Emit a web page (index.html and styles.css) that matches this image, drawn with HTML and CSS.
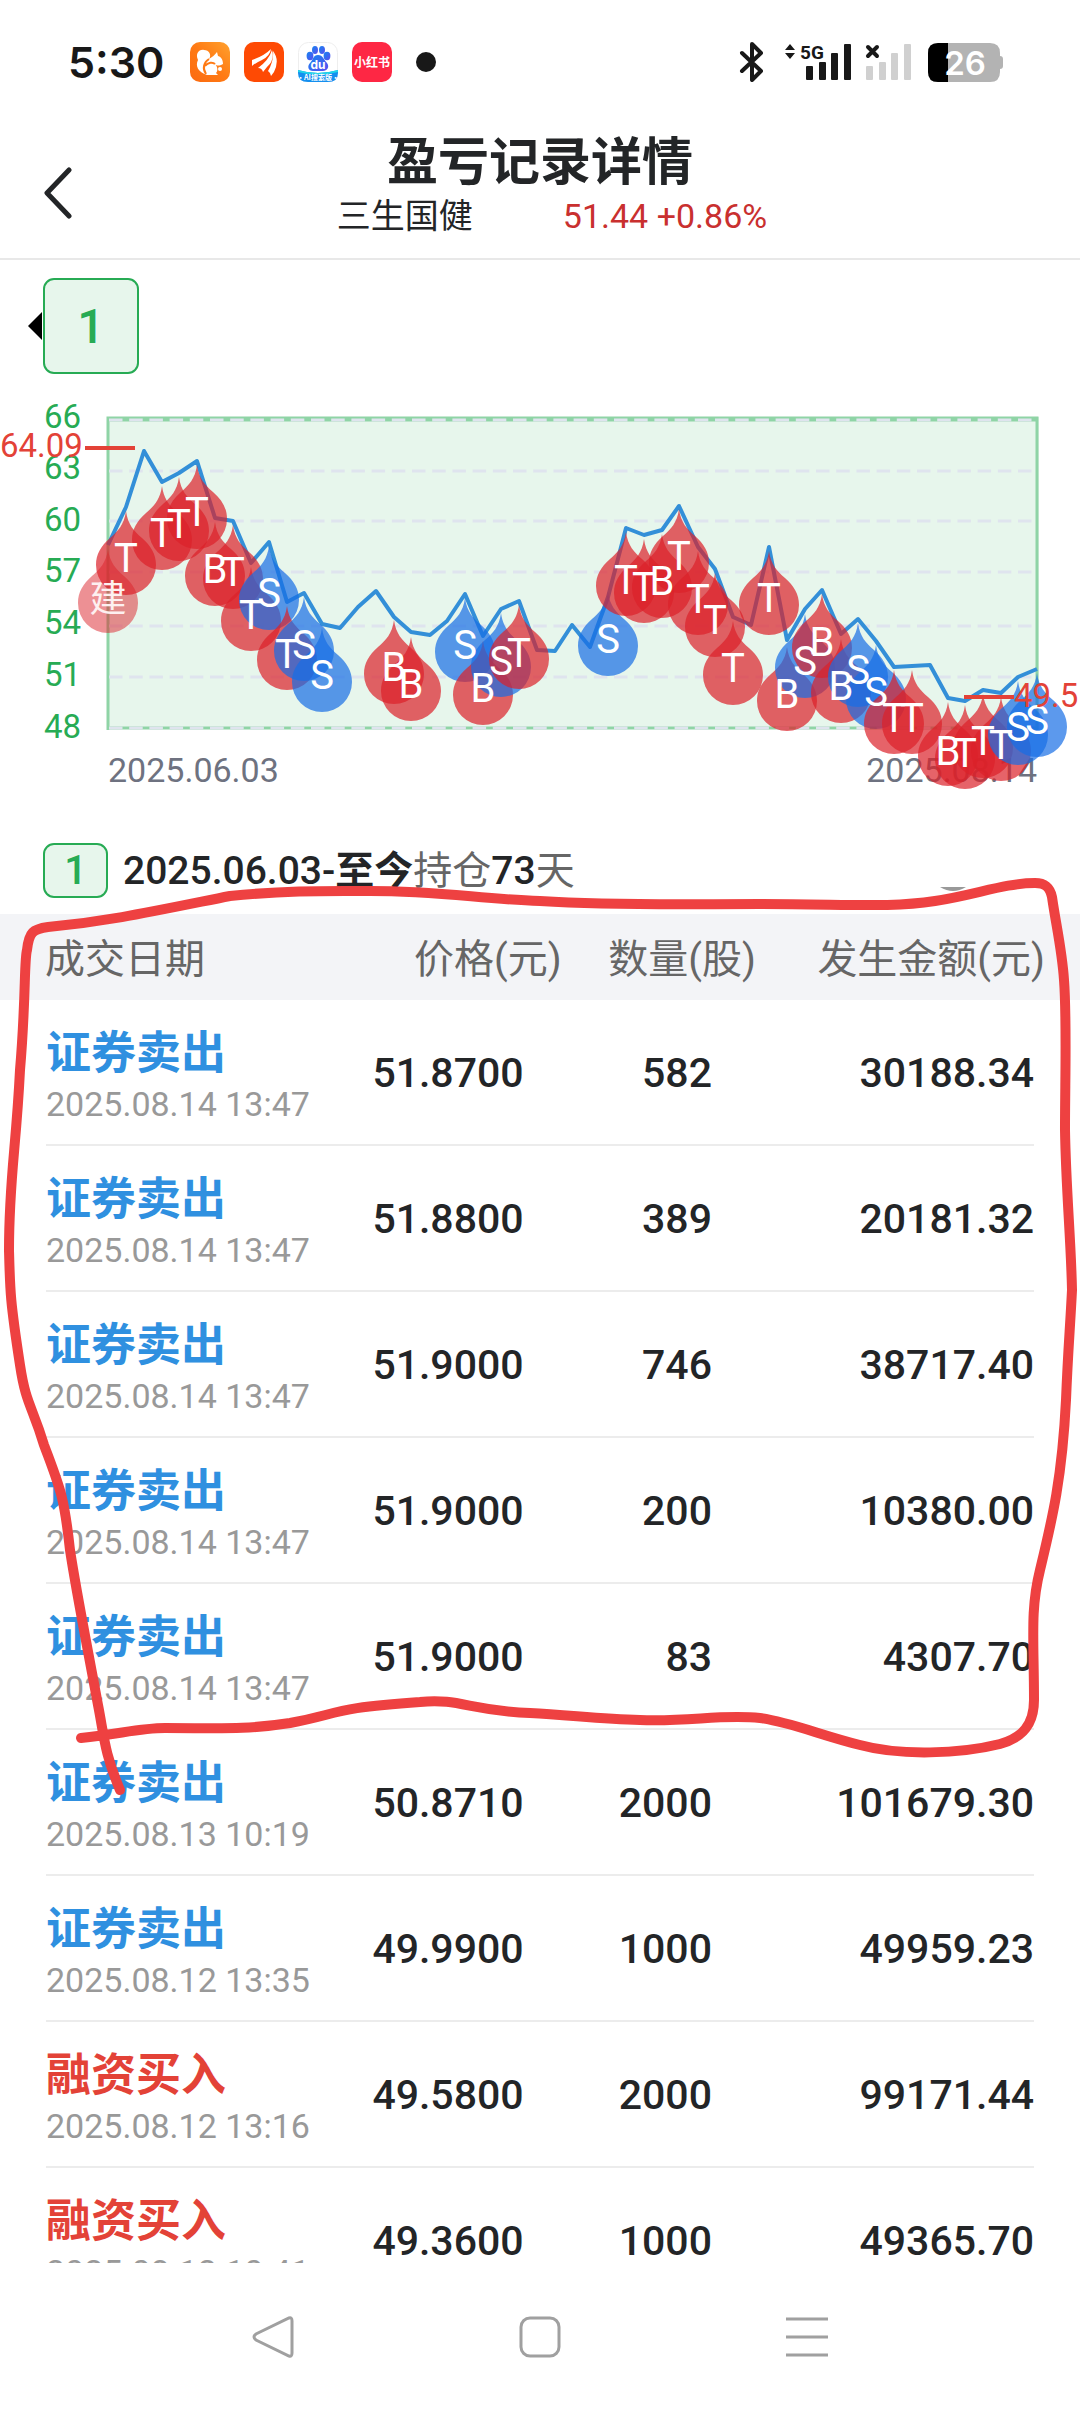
FILE: index.html
```html
<!DOCTYPE html>
<html lang="zh-CN">
<head>
<meta charset="utf-8">
<meta name="viewport" content="width=device-width, initial-scale=1">
<title>盈亏记录详情</title>
<link rel="stylesheet" href="styles.css">
</head>
<body>
<div class="screen">
  <div class="status-bar">
    <span class="clock">5:30</span>
    <div class="app-icons">
      <svg viewBox="0 0 40 40" class="app-icon" aria-hidden="true">
        <defs><linearGradient id="uc" x1="1" y1="0" x2="0" y2="1"><stop offset="0" stop-color="#ffa22e"/><stop offset="0.5" stop-color="#ff7a14"/><stop offset="1" stop-color="#fb6a10"/></linearGradient></defs>
        <rect width="40" height="40" rx="10" fill="url(#uc)"/>
        <path fill="#fff" d="M17 33C8 30 5 24 8 18C5 12 9 7 14 8C19 8 22 13 19 17C22 15 25 13 27 10L28 14C32 15 33 19 33 22C29 24 27 24 25 22C28 25 28 29 26 31L28 33Z"/>
        <path fill="none" stroke="#ff7a14" stroke-width="2" d="M19 17C14 20 12 26 16 32M15 24C18 20 23 20 25 22"/>
        <circle cx="30" cy="27" r="2" fill="#fff"/>
      </svg>
      <svg viewBox="0 0 40 40" class="app-icon" aria-hidden="true">
        <rect width="40" height="40" rx="10" fill="#fe4a04"/>
        <path fill="#fff" d="M8 18Q20 14 27 7Q26 14 18 18Q13 20 8 24ZM14 26Q25 18 28 8Q31 18 23 25L19 30Q18 26 14 26ZM24 29Q30 19 29 9Q36 18 30 30L27 34Q27 31 24 29Z"/>
      </svg>
      <svg viewBox="0 0 40 40" class="app-icon" aria-hidden="true">
        <defs><linearGradient id="bd" x1="0" y1="0" x2="1" y2="1"><stop offset="0" stop-color="#1486f0"/><stop offset="1" stop-color="#5a4cf0"/></linearGradient></defs>
        <rect x="0.5" y="0.5" width="39" height="39" rx="10" fill="#fff" stroke="#eee"/>
        <g fill="url(#bd)"><ellipse cx="12" cy="14" rx="3.4" ry="4.2"/><ellipse cx="17" cy="8" rx="3" ry="4"/><ellipse cx="24" cy="8" rx="3" ry="4"/><ellipse cx="29" cy="14" rx="3.4" ry="4.2"/><path d="M20 13C25 13 26 18 29 21C32 25 29 29 25 29L15 29C10 29 9 24 12 21C15 18 15 13 20 13Z"/></g>
        <path d="M0 28Q20 34 40 28V31Q40 40 30 40H10Q0 40 0 31Z" fill="#158fef"/>
        <path d="M0 28Q20 34 40 28L40 30Q20 35 0 30Z" fill="#20d6e8"/>
        <text x="20" y="27" class="icon-text du">du</text>
        <text x="20" y="38" class="icon-text tiny">·AI搜索版·</text>
      </svg>
      <svg viewBox="0 0 40 40" class="app-icon" aria-hidden="true">
        <rect width="40" height="40" rx="10" fill="#fe2744"/>
        <text x="20" y="25" class="icon-text red-book">小红书</text>
      </svg>
      <span class="more-dot"></span>
    </div>
    <svg class="system-icons" viewBox="0 0 268 40" aria-label="蓝牙 5G 电量26%">
      <path d="M3 11L22 29L13 38V2L22 11L3 29" fill="none" stroke="#181818" stroke-width="4" stroke-linejoin="round" stroke-linecap="round"/>
      <path d="M46 8L51 2L56 8ZM46 11L51 17L56 11Z" fill="#181818"/>
      <text x="61" y="17" class="net-label">5G</text>
      <g fill="#181818"><rect x="67" y="24" width="7" height="14" rx="1"/><rect x="80" y="20" width="7" height="18" rx="1"/><rect x="92" y="11" width="7" height="27" rx="1"/><rect x="105" y="2" width="7" height="36" rx="1"/></g>
      <path d="M129 5L138 14M138 5L129 14" stroke="#181818" stroke-width="4" stroke-linecap="round"/>
      <g fill="#d0d0d0"><rect x="127" y="24" width="7" height="14" rx="1"/><rect x="140" y="20" width="7" height="18" rx="1"/><rect x="152" y="11" width="7" height="27" rx="1"/><rect x="165" y="2" width="7" height="36" rx="1"/></g>
      <path d="M199 1H251Q261 1 261 11V14Q264 14 264 17V24Q264 27 261 27V30Q261 40 251 40H199Q189 40 189 30V11Q189 1 199 1Z" fill="#b3b3b3"/>
      <path d="M209 1H199Q189 1 189 11V30Q189 40 199 40H209Z" fill="#000"/>
      <text x="226" y="33" class="battery-label">26</text>
    </svg>
  </div>

  <header class="title-bar">
    <button class="back" aria-label="返回"><svg viewBox="0 0 28 52"><path d="M25 3L3 26L25 49" fill="none" stroke="#232527" stroke-width="5" stroke-linecap="round" stroke-linejoin="round"/></svg></button>
    <h1>盈亏记录详情</h1>
    <p class="stock"><span>三生国健</span><span class="quote">51.44 +0.86%</span></p>
  </header>

  <main>
    <div class="periods">
      <svg class="arrow" viewBox="0 0 14 28" aria-hidden="true"><path d="M14 0V28L0 14Z"/></svg>
      <button class="period">1</button>
    </div>

    <svg class="chart" viewBox="0 390 1080 410" role="img" aria-label="股价走势与买卖点">
      <defs>
        <path id="drop" d="M0 0C2 14 8 20 16 27C25 35 30 43 30 54A30 30 0 0 1 -30 54C-30 43 -25 35 -16 27C-8 20 -2 14 0 0Z"/>
      </defs>
      <rect x="107" y="417" width="932" height="312" fill="#e7f6ec"/>
      <path d="M108 730V418H1037V730M108 420H1037M108 728H1037" fill="none" stroke="#8fd4a6" stroke-width="3"/>
      <path d="M109 420H1037M109 471H1037M109 521H1037M109 572H1037M109 626H1037M109 677H1037M109 728H1037" stroke="#dfe4ee" stroke-width="3" stroke-dasharray="13.5 6.7" fill="none"/>
      <g class="axis">
        <text x="81" y="428">66</text><text x="81" y="479">63</text><text x="81" y="531">60</text><text x="81" y="582">57</text><text x="81" y="634">54</text><text x="81" y="686">51</text><text x="81" y="738">48</text>
      </g>
      <g class="dates"><text x="108" y="782">2025.06.03</text><text x="1037" y="782" text-anchor="end">2025.08.14</text></g>
      <polyline fill="none" stroke="#338fd8" stroke-width="4" stroke-linejoin="round" points="108,545 126,507 144,451 162,482 179,473 197,461 215,518 233,521 251,563 269,542 287,602 304,593 322,624 340,628 358,607 376,591 394,617 411,632 430,635 447,621 465,594 483,636 501,609 519,601 537,650 555,651 572,625 590,647 608,597 626,528 644,535 662,530 679,506 698,547 715,569 733,617 751,625 769,547 787,640 805,609 822,590 841,634 858,619 876,641 894,667 912,666 930,665 948,698 965,701 983,690 1001,693 1018,677 1037,669"/>
      <g class="drops">
        <use href="#drop" x="108" y="549" class="open"/>
        <use href="#drop" x="126" y="511"/>
        <use href="#drop" x="162" y="486"/>
        <use href="#drop" x="179" y="477"/>
        <use href="#drop" x="197" y="465"/>
        <use href="#drop" x="215" y="522"/>
        <use href="#drop" x="233" y="525"/>
        <use href="#drop" x="251" y="567"/>
        <use href="#drop" x="269" y="546" class="sell"/>
        <use href="#drop" x="287" y="606"/>
        <use href="#drop" x="304" y="597" class="sell"/>
        <use href="#drop" x="322" y="628" class="sell"/>
        <use href="#drop" x="394" y="620"/>
        <use href="#drop" x="411" y="637"/>
        <use href="#drop" x="465" y="598" class="sell"/>
        <use href="#drop" x="483" y="641"/>
        <use href="#drop" x="501" y="613" class="sell"/>
        <use href="#drop" x="519" y="605"/>
        <use href="#drop" x="608" y="592" class="sell"/>
        <use href="#drop" x="626" y="532"/>
        <use href="#drop" x="644" y="539"/>
        <use href="#drop" x="662" y="534"/>
        <use href="#drop" x="679" y="509"/>
        <use href="#drop" x="698" y="551"/>
        <use href="#drop" x="715" y="573"/>
        <use href="#drop" x="733" y="621"/>
        <use href="#drop" x="769" y="551"/>
        <use href="#drop" x="787" y="647"/>
        <use href="#drop" x="805" y="614" class="sell"/>
        <use href="#drop" x="822" y="594"/>
        <use href="#drop" x="841" y="639"/>
        <use href="#drop" x="858" y="623" class="sell"/>
        <use href="#drop" x="876" y="645" class="sell"/>
        <use href="#drop" x="894" y="670"/>
        <use href="#drop" x="912" y="670"/>
        <use href="#drop" x="948" y="702"/>
        <use href="#drop" x="965" y="705"/>
        <use href="#drop" x="983" y="694"/>
        <use href="#drop" x="1001" y="697"/>
        <use href="#drop" x="1018" y="681" class="sell"/>
        <use href="#drop" x="1037" y="673" class="sell"/>
      </g>
      <g class="marks">
        <text x="108" y="612" class="open">建</text>
        <text x="126" y="572">T</text><text x="162" y="547">T</text><text x="179" y="538">T</text><text x="197" y="526">T</text>
        <text x="215" y="583">B</text><text x="233" y="586">T</text><text x="251" y="629">T</text><text x="269" y="607">S</text>
        <text x="287" y="668">T</text><text x="304" y="659">S</text><text x="322" y="689">S</text>
        <text x="394" y="681">B</text><text x="411" y="698">B</text><text x="465" y="659">S</text><text x="483" y="702">B</text>
        <text x="501" y="675">S</text><text x="519" y="667">T</text><text x="608" y="653">S</text>
        <text x="626" y="594">T</text><text x="644" y="601">T</text><text x="662" y="595">B</text><text x="679" y="570">T</text>
        <text x="698" y="613">T</text><text x="715" y="634">T</text><text x="733" y="682">T</text><text x="769" y="612">T</text>
        <text x="787" y="708">B</text><text x="805" y="675">S</text><text x="822" y="656">B</text><text x="841" y="700">B</text>
        <text x="858" y="684">S</text><text x="876" y="706">S</text><text x="894" y="732">T</text><text x="912" y="732">T</text>
        <text x="948" y="765">B</text><text x="965" y="767">T</text><text x="983" y="755">T</text><text x="1001" y="759">T</text>
        <text x="1018" y="741">S</text><text x="1037" y="734">S</text>
      </g>
      <path d="M85 448H135M964 697H1014" stroke="#e34237" stroke-width="4"/>
      <g class="extremes"><text x="0" y="457">64.09</text><text x="1014" y="707">49.5</text></g>
    </svg>

    <section class="summary">
      <span class="badge">1</span>
      <p><b>2025.06.03-</b><strong>至今</strong>持仓<b>73</b>天</p>
      <svg class="summary-arc" viewBox="0 0 26 4" aria-hidden="true"><path d="M0 0H26Q13 8 0 0Z" fill="#999"/></svg>
    </section>

    <table>
      <thead><tr><th>成交日期</th><th>价格(元)</th><th>数量(股)</th><th>发生金额(元)</th></tr></thead>
      <tbody>
        <tr><td><span class="sell">证券卖出</span><time>2025.08.14 13:47</time></td><td>51.8700</td><td>582</td><td>30188.34</td></tr>
        <tr><td><span class="sell">证券卖出</span><time>2025.08.14 13:47</time></td><td>51.8800</td><td>389</td><td>20181.32</td></tr>
        <tr><td><span class="sell">证券卖出</span><time>2025.08.14 13:47</time></td><td>51.9000</td><td>746</td><td>38717.40</td></tr>
        <tr><td><span class="sell">证券卖出</span><time>2025.08.14 13:47</time></td><td>51.9000</td><td>200</td><td>10380.00</td></tr>
        <tr><td><span class="sell">证券卖出</span><time>2025.08.14 13:47</time></td><td>51.9000</td><td>83</td><td>4307.70</td></tr>
        <tr><td><span class="sell">证券卖出</span><time>2025.08.13 10:19</time></td><td>50.8710</td><td>2000</td><td>101679.30</td></tr>
        <tr><td><span class="sell">证券卖出</span><time>2025.08.12 13:35</time></td><td>49.9900</td><td>1000</td><td>49959.23</td></tr>
        <tr><td><span class="buy">融资买入</span><time>2025.08.12 13:16</time></td><td>49.5800</td><td>2000</td><td>99171.44</td></tr>
        <tr><td><span class="buy">融资买入</span><time>2025.08.12 10:41</time></td><td>49.3600</td><td>1000</td><td>49365.70</td></tr>
      </tbody>
    </table>
  </main>

  <nav class="system-nav">
    <button aria-label="返回"><svg viewBox="0 0 42 42"><path d="M37 2Q40 1 40 5V37Q40 41 37 40L4 24Q0 21 4 18Z"/></svg></button>
    <button aria-label="主页"><svg viewBox="0 0 42 42"><rect x="2" y="2" width="38" height="38" rx="9"/></svg></button>
    <button aria-label="最近任务"><svg viewBox="0 0 42 42"><path d="M0 3H42M0 21H42M0 39H42"/></svg></button>
  </nav>

  <svg class="pen" viewBox="0 0 1080 2412" aria-hidden="true">
    <path d="M120 1790C104 1752 104 1735 98 1705C86 1640 76 1590 70 1550C64 1495 60 1488 44 1445C32 1405 26 1405 20 1365C10 1300 10 1290 9 1250C9 1180 16 1150 20 1070C26 1000 24 960 27 950C29 932 33 929 48 927C110 921 150 912 230 896C290 890 330 891 370 891C440 891 480 899 540 901C620 906 690 904 760 904C850 904 890 908 935 901C975 895 1005 883 1035 883C1046 883 1050 888 1052 897C1056 925 1062 950 1064 980C1067 1020 1065 1080 1065 1130C1066 1190 1071 1240 1072 1290C1070 1330 1068 1350 1066 1400C1062 1480 1052 1520 1040 1570C1030 1610 1034 1640 1034 1700C1034 1725 1022 1738 1000 1744C960 1754 900 1756 860 1745C820 1735 790 1722 760 1718C720 1714 690 1722 640 1720C600 1719 570 1715 530 1713C470 1711 460 1698 420 1702C330 1708 340 1714 290 1723C245 1730 220 1728 165 1728C140 1728 120 1734 81 1738"/>
  </svg>
</div>
</body>
</html>
```
FILE: styles.css
```css
* { box-sizing: border-box; }

body {
  margin: 0;
  background: #fff;
  color: #232527;
  font-family: Roboto, "Noto Sans CJK SC", sans-serif;
}

button {
  border: 0;
  padding: 0;
  background: none;
  font: inherit;
  color: inherit;
}

svg { display: block; }

.screen {
  position: relative;
  display: flex;
  flex-direction: column;
  height: 100vh;
  overflow: hidden;
}

/* Status bar */
.status-bar {
  display: flex;
  align-items: center;
  flex: none;
  height: 124px;
  padding: 0 73px 0 68px;
}

.clock {
  width: 122px;
  font: 600 43px/44px Inter, sans-serif;
  color: #181818;
}

.app-icons {
  display: flex;
  align-items: center;
  gap: 14px;
}

.app-icon {
  width: 40px;
  height: 40px;
}

.icon-text {
  fill: #fff;
  font-family: "Noto Sans CJK SC", sans-serif;
  font-weight: 700;
  text-anchor: middle;
}

.du { font-size: 12px; font-family: Inter, sans-serif; }
.tiny { font-size: 7px; }
.red-book { font-size: 12px; }

.more-dot {
  width: 20px;
  height: 20px;
  margin-left: 10px;
  border-radius: 50%;
  background: #181818;
}

.system-icons {
  width: 268px;
  height: 40px;
  margin-left: auto;
}

.net-label { font: 700 19px Roboto, sans-serif; fill: #181818; }
.battery-label { font: 600 33px Inter, sans-serif; fill: #fff; text-anchor: middle; }

/* Title bar */
.title-bar {
  position: relative;
  flex: none;
  height: 136px;
  padding-top: 3px;
  border-bottom: 2px solid #e8e8e8;
  text-align: center;
}

.back {
  position: absolute;
  left: 44px;
  top: 43px;
}

.back svg { width: 28px; height: 52px; }

h1 {
  margin: 0;
  font-size: 51px;
  line-height: 72px;
  font-weight: 700;
}

.stock {
  display: flex;
  justify-content: center;
  align-items: center;
  gap: 90px;
  margin: 0;
  padding-left: 24px;
  font-size: 34px;
  line-height: 34px;
}

.quote {
  color: #c9302f;
}

main {
  flex: 1;
  min-height: 0;
  overflow: hidden;
}

/* Period picker */
.periods {
  display: flex;
  align-items: center;
  gap: 1px;
  height: 130px;
  padding: 2px 28px 0;
}

.arrow { width: 14px; height: 28px; }

.period,
.badge {
  border: 2px solid #27ab54;
  border-radius: 11px;
  background: #e7f6ec;
  color: #27ab54;
  font-weight: 500;
  text-align: center;
}

.period {
  width: 96px;
  height: 96px;
  font-size: 48px;
}

/* Chart */
.chart { width: 100%; }
.chart text { font-size: 33px; }
.axis { fill: #27ab54; text-anchor: end; }
.dates { fill: #6e7280; }
.chart .dates text { font-size: 34px; }
.extremes { fill: #e34237; }
.drops { fill: #db2129; fill-opacity: 0.7; }
.drops .sell { fill: #176de6; }
.drops .open { fill-opacity: 0.5; }
.marks { fill: #fff; text-anchor: middle; }
.chart .marks text { font-size: 40px; }
.chart .marks .open { font-size: 37px; fill: #fdf0f0; }

/* Holding summary */
.summary {
  display: flex;
  align-items: center;
  height: 114px;
  padding: 43px 114px 16px 43px;
}

.badge {
  width: 65px;
  height: 55px;
  font-size: 40px;
  line-height: 52px;
}

.summary p {
  margin: 0 0 0 15px;
  color: #666;
  font-size: 39px;
  line-height: 52px;
}

.summary b { color: #232527; font-weight: 500; }
.summary strong { color: #232527; font-weight: 700; }

.summary-arc {
  width: 26px;
  height: 4px;
  margin: 36px 0 0 auto;
}

/* Trade records */
table {
  width: 100%;
  table-layout: fixed;
  border-collapse: collapse;
}

th {
  height: 86px;
  padding: 0 0 3px;
  background: #f3f4f7;
  color: #666;
  font-size: 40px;
  font-weight: 400;
  text-align: right;
}

th:first-child { width: 31%; padding-left: 45px; text-align: left; }
th:nth-child(2) { width: 21%; }
th:nth-child(3) { width: 18%; }
th:last-child { padding-right: 35px; }

tbody tr {
  background: linear-gradient(#ececec, #ececec) 46px 100% / calc(100% - 92px) 2px no-repeat;
}

td {
  height: 146px;
  padding: 0 44px 0 0;
  font-size: 41px;
  font-weight: 500;
  text-align: right;
}

td:first-child { padding: 6px 0 0 46px; text-align: left; }
td:nth-child(2) { padding-right: 38px; }
td:last-child { padding-right: 46px; }

td span {
  display: block;
  font-size: 45px;
  line-height: 56px;
  font-weight: 700;
}

.sell { color: #2f90e0; }
.buy { color: #e34237; }

time {
  display: block;
  color: #999;
  font-size: 34px;
  line-height: 44px;
  font-weight: 400;
}

/* System navigation */
.system-nav {
  display: flex;
  flex: none;
  justify-content: center;
  gap: 225px;
  height: 149px;
  padding-top: 53px;
}

.system-nav svg {
  width: 42px;
  height: 42px;
  fill: none;
  stroke: #a0a0a0;
  stroke-width: 3;
}

.system-nav button { height: 42px; }

/* Freehand highlight over the first trades */
.pen {
  position: absolute;
  left: 0;
  top: 0;
  width: 100%;
  pointer-events: none;
  fill: none;
  stroke: #ee4141;
  stroke-width: 10;
  stroke-linecap: round;
  stroke-linejoin: round;
}
```
